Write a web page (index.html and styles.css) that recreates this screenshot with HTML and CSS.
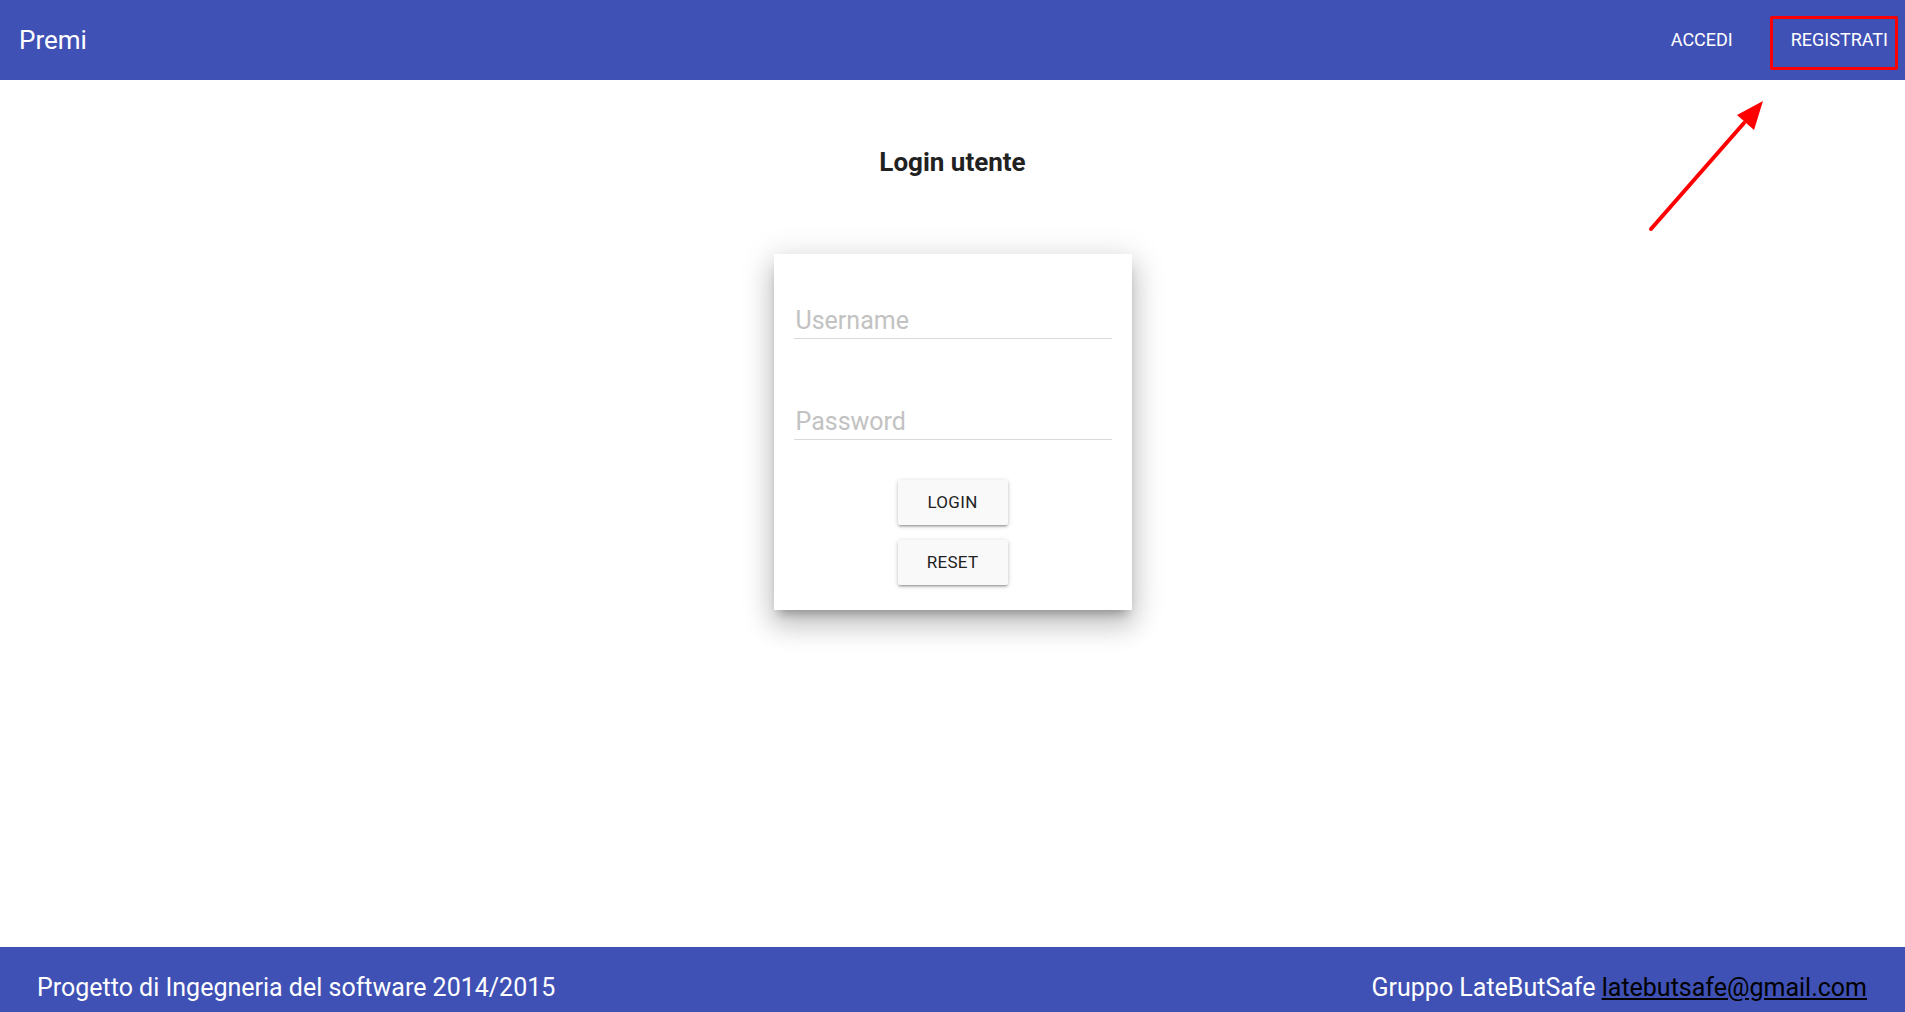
FILE: index.html
```html
<!DOCTYPE html>
<html lang="it">
<head>
<meta charset="utf-8">
<title>Premi - Login</title>
<link rel="stylesheet" href="styles.css">
</head>
<body>
<div class="page">
  <header class="topbar">
    <div class="brand">Premi</div>
    <nav class="nav">
      <a class="nav-link" href="#">ACCEDI</a>
      <a class="nav-link" href="#">REGISTRATI</a>
    </nav>
  </header>
  <main class="main">
    <h1 class="title">Login utente</h1>
    <form class="card">
      <input class="field" type="text" placeholder="Username">
      <input class="field field-second" type="password" placeholder="Password">
      <div class="actions">
        <button class="btn" type="button">LOGIN</button>
        <button class="btn" type="button">RESET</button>
      </div>
    </form>
  </main>
  <footer class="footer">
    <span>Progetto di Ingegneria del software 2014/2015</span>
    <span>Gruppo LateButSafe <a class="mail" href="#">latebutsafe@gmail.com</a></span>
  </footer>
  <div class="highlight"></div>
  <svg class="arrow" width="140" height="150" viewBox="0 0 140 150">
    <line x1="11" y1="138" x2="104" y2="32" stroke="#ff0000" stroke-width="4" stroke-linecap="round"/>
    <polygon points="123,10 97,24 114,39" fill="#ff0000"/>
  </svg>
</div>
</body>
</html>
```

FILE: styles.css
```css
html, body {
  margin: 0;
  padding: 0;
  background: #ffffff;
}

body {
  font-family: Roboto, "Liberation Sans", sans-serif;
  color: #222;
}

.page {
  position: relative;
  height: 100vh;
  display: flex;
  flex-direction: column;
  overflow: hidden;
}

.topbar {
  height: 80px;
  flex: 0 0 80px;
  background: #3f51b5;
  display: flex;
  align-items: center;
  justify-content: space-between;
  color: #ffffff;
}

.brand {
  padding-left: 19px;
  font-size: 26px;
  line-height: 80px;
}

.nav {
  display: flex;
  height: 80px;
  gap: 24px;
}

.nav-link {
  color: #ffffff;
  text-decoration: none;
  font-size: 18px;
  line-height: 80px;
  padding: 0 17px;
}

.main {
  flex: 1;
  display: flex;
  flex-direction: column;
  align-items: center;
}

.title {
  margin: 67px 0 0;
  font-size: 26px;
  line-height: 30px;
  font-weight: 700;
  color: #212121;
}

.card {
  margin-top: 77px;
  width: 358px;
  box-sizing: border-box;
  padding: 39px 20px 25px;
  background: #ffffff;
  box-shadow: 0 16px 24px 2px rgba(0,0,0,0.14), 0 6px 30px 5px rgba(0,0,0,0.12), 0 8px 10px -5px rgba(0,0,0,0.3);
  display: flex;
  flex-direction: column;
}

.field {
  display: block;
  width: 100%;
  height: 46px;
  box-sizing: border-box;
  padding: 9px 0 0 2px;
  margin: 0;
  border: none;
  border-bottom: 1px solid #dadada;
  outline: none;
  font-family: Roboto, "Liberation Sans", sans-serif;
  font-size: 25px;
  color: #333;
  background: transparent;
}

.field::placeholder {
  color: #c2c2c2;
  opacity: 1;
}

.field-second {
  margin-top: 55px;
}

.actions {
  margin-top: 40px;
  display: flex;
  flex-direction: column;
  align-items: center;
  gap: 15px;
}

.btn {
  width: 110px;
  height: 45px;
  padding: 0 0 2px;
  border: none;
  border-radius: 2px;
  background: #f9f9f9;
  color: #222;
  font-family: Roboto, "Liberation Sans", sans-serif;
  font-size: 17px;
  letter-spacing: 0.3px;
  box-shadow: 0 2px 2px 0 rgba(0,0,0,0.14), 0 3px 1px -2px rgba(0,0,0,0.12), 0 1px 5px 0 rgba(0,0,0,0.2);
  cursor: pointer;
}

.footer {
  flex: 0 0 65px;
  height: 65px;
  box-sizing: border-box;
  background: #3f51b5;
  color: #ffffff;
  display: flex;
  justify-content: space-between;
  align-items: flex-start;
  padding: 26px 38px 0 37px;
  font-size: 25px;
  line-height: 30px;
}

.mail {
  color: #000000;
  text-decoration: underline;
}

.highlight {
  position: absolute;
  left: 1770px;
  top: 16px;
  width: 128px;
  height: 54px;
  box-sizing: border-box;
  border: 3px solid #ff0000;
  border-radius: 2px;
}

.arrow {
  position: absolute;
  left: 1640px;
  top: 91px;
}
```
